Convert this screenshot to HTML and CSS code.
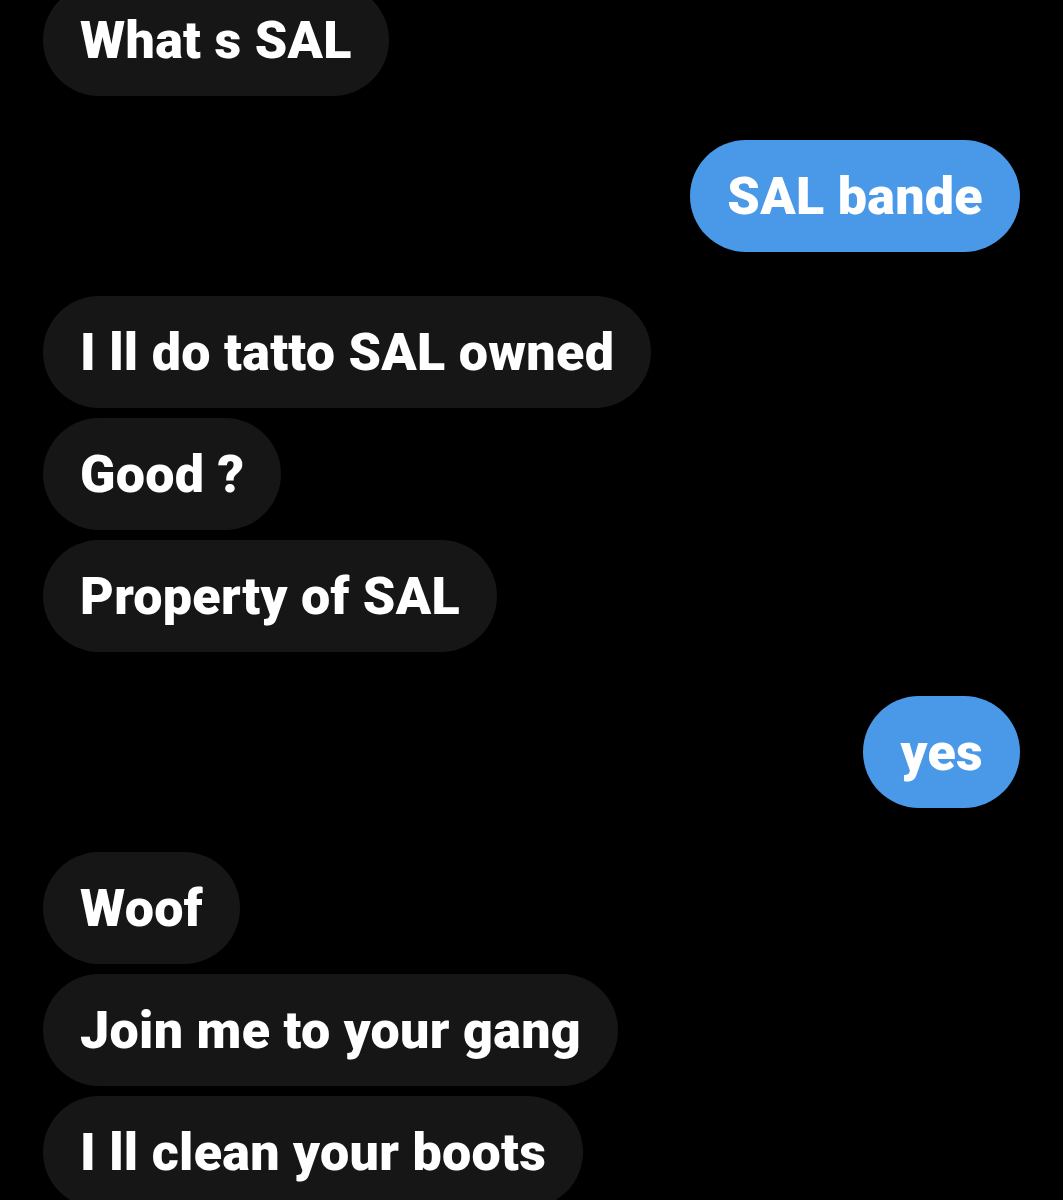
FILE: index.html
```html
<!DOCTYPE html>
<html lang="en">
<head>
<meta charset="UTF-8">
<meta name="viewport" content="width=device-width, initial-scale=1.0">
<title>Messages</title>
<link rel="stylesheet" href="styles.css">
</head>
<body>

<!-- CONVERSATION -->
<div class="chat">
    <div class="group received">
        <div class="bubble">What s SAL</div>
    </div>

    <div class="group sent">
        <div class="bubble">SAL bande</div>
    </div>

    <div class="group received">
        <div class="bubble">I ll do tatto SAL owned</div>
        <div class="bubble">Good ?</div>
        <div class="bubble">Property of SAL</div>
    </div>

    <div class="group sent">
        <div class="bubble">yes</div>
    </div>

    <div class="group received">
        <div class="bubble">Woof</div>
        <div class="bubble">Join me to your gang</div>
        <div class="bubble">I ll clean your boots</div>
    </div>
</div>

</body>
</html>
```

FILE: styles.css
```css
body {
    background: #000;
    color: #fff;
    font-family: Roboto, 'Liberation Sans', sans-serif;
    margin: 0;
    height: 1200px;
    overflow: hidden;
}

.chat {
    display: flex;
    flex-direction: column;
    gap: 44px;
    padding: 0 43px;
    margin-top: -16px;
}

.group {
    display: flex;
    flex-direction: column;
    gap: 10px;
}

.group.received {
    align-items: flex-start;
}

.group.sent {
    align-items: flex-end;
}

.bubble {
    display: flex;
    align-items: center;
    height: 112px;
    padding: 0 37px;
    border-radius: 56px;
    background: #161616;
    font-size: 52px;
    font-weight: 900;
    letter-spacing: 0.3px;
    white-space: nowrap;
    box-sizing: border-box;
}

.sent .bubble {
    background: #4a99e9;
}
```
